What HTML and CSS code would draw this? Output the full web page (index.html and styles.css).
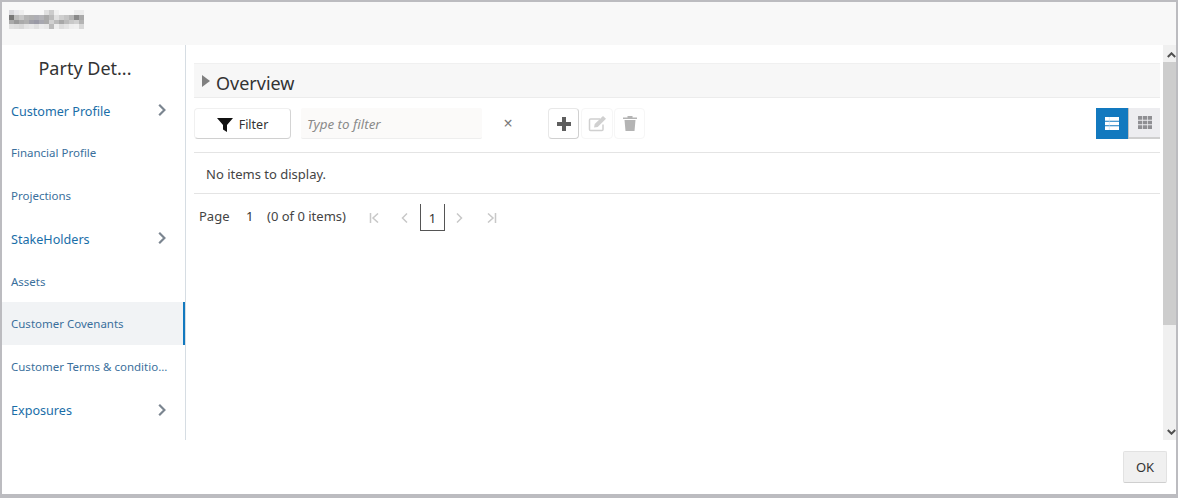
FILE: index.html
```html
<!DOCTYPE html>
<html lang="en">
<head>
<meta charset="utf-8">
<title>Party Details</title>
<link rel="stylesheet" href="styles.css">
</head>
<body>
<div class="dialog">
  <header class="dialog-header">
    <svg class="logo" width="75" height="19" viewBox="0 0 75 19" shape-rendering="crispEdges" aria-hidden="true">
      <g>
        <rect x="0" y="0" width="5" height="5" fill="#d8d8dc"/><rect x="5" y="0" width="5" height="5" fill="#e8e8ec"/><rect x="10" y="0" width="5" height="5" fill="#eeeeee"/><rect x="35" y="0" width="5" height="5" fill="#e0e0e0"/><rect x="40" y="0" width="5" height="5" fill="#cccccc"/><rect x="45" y="0" width="5" height="5" fill="#f0f0f0"/><rect x="65" y="0" width="5" height="5" fill="#ececec"/><rect x="70" y="0" width="5" height="5" fill="#ececec"/>
        <rect x="0" y="5" width="5" height="5" fill="#777777"/><rect x="5" y="5" width="5" height="5" fill="#bbbbbb"/><rect x="10" y="5" width="5" height="5" fill="#c8c8c8"/><rect x="15" y="5" width="5" height="5" fill="#b5b5b5"/><rect x="20" y="5" width="5" height="5" fill="#b0b0b0"/><rect x="25" y="5" width="5" height="5" fill="#aeaeb4"/><rect x="30" y="5" width="5" height="5" fill="#b4b4b8"/><rect x="35" y="5" width="5" height="5" fill="#aaaaaa"/><rect x="40" y="5" width="5" height="5" fill="#bbbbbb"/><rect x="45" y="5" width="5" height="5" fill="#e0e0e0"/><rect x="50" y="5" width="5" height="5" fill="#cfcfcf"/><rect x="55" y="5" width="5" height="5" fill="#c5c5c5"/><rect x="60" y="5" width="5" height="5" fill="#b5b5b5"/><rect x="65" y="5" width="5" height="5" fill="#8a8a8a"/><rect x="70" y="5" width="5" height="5" fill="#aaaaaa"/>
        <rect x="0" y="10" width="5" height="4" fill="#aaaaaa"/><rect x="5" y="10" width="5" height="4" fill="#999999"/><rect x="10" y="10" width="5" height="4" fill="#aaaaaa"/><rect x="15" y="10" width="5" height="4" fill="#b0b0b0"/><rect x="20" y="10" width="5" height="4" fill="#a0a0a8"/><rect x="25" y="10" width="5" height="4" fill="#9a9aa6"/><rect x="30" y="10" width="5" height="4" fill="#a8a8b0"/><rect x="35" y="10" width="5" height="4" fill="#aaaaaa"/><rect x="40" y="10" width="5" height="4" fill="#d0d0d0"/><rect x="45" y="10" width="5" height="4" fill="#bbbbbb"/><rect x="50" y="10" width="5" height="4" fill="#a8a8a8"/><rect x="55" y="10" width="5" height="4" fill="#bbbbbb"/><rect x="60" y="10" width="5" height="4" fill="#c8c8c8"/><rect x="65" y="10" width="5" height="4" fill="#d0d0d0"/><rect x="70" y="10" width="5" height="4" fill="#b4b4b4"/>
        <rect x="0" y="14" width="5" height="5" fill="#e0e0e0"/><rect x="5" y="14" width="5" height="5" fill="#dddddd"/><rect x="10" y="14" width="5" height="5" fill="#d8d8d8"/><rect x="15" y="14" width="5" height="5" fill="#e4e4e4"/><rect x="20" y="14" width="5" height="5" fill="#e8e8e8"/><rect x="25" y="14" width="5" height="5" fill="#e0e0e0"/><rect x="30" y="14" width="5" height="5" fill="#ececec"/><rect x="35" y="14" width="5" height="5" fill="#e8e8e8"/><rect x="40" y="14" width="5" height="5" fill="#bbbbbb"/><rect x="45" y="14" width="5" height="5" fill="#eeeeee"/><rect x="50" y="14" width="5" height="5" fill="#dddddd"/><rect x="55" y="14" width="5" height="5" fill="#e4e4e4"/><rect x="60" y="14" width="5" height="5" fill="#eeeeee"/><rect x="65" y="14" width="5" height="5" fill="#f0f0f0"/><rect x="70" y="14" width="5" height="5" fill="#d8d8d8"/>
      </g>
    </svg>
  </header>
  <div class="dialog-body">
    <nav class="sidenav">
      <h2 class="sidenav-title">Party Det...</h2>
      <ul class="nav-list">
        <li class="nav-item first">Customer Profile<svg class="chev" viewBox="0 0 8 12"><path d="M1.200 .8L6.400 6l-5.200 5.200" /></svg></li>
        <li class="nav-item small">Financial Profile</li>
        <li class="nav-item small">Projections</li>
        <li class="nav-item">StakeHolders<svg class="chev" viewBox="0 0 8 12"><path d="M1.200 .8L6.400 6l-5.200 5.200" /></svg></li>
        <li class="nav-item small">Assets</li>
        <li class="nav-item small active">Customer Covenants</li>
        <li class="nav-item small">Customer Terms &amp; conditio...</li>
        <li class="nav-item">Exposures<svg class="chev" viewBox="0 0 8 12"><path d="M1.200 .8L6.400 6l-5.200 5.200" /></svg></li>
      </ul>
    </nav>
    <main class="content">
      <div class="section-head">
        <span class="caret"></span>
        <span class="section-title">Overview</span>
      </div>
      <div class="toolbar">
        <button class="btn filter-btn">
          <svg width="16" height="14" viewBox="0 0 16 14"><path d="M0 0h16L10 7v7L6 11.500V7z" fill="#111"/></svg>
          Filter
        </button>
        <div class="filter-input">Type to filter</div>
        <span class="clear">&#215;</span>
        <div class="actions">
          <button class="icon-btn raised"><svg width="14" height="14" viewBox="0 0 14 14"><path d="M5 0h4v5h5v4H9v5H5V9H0V5h5z" fill="#5e5e5e"/></svg></button>
          <button class="icon-btn"><svg width="19" height="16" viewBox="0 0 19 16"><path d="M12 3H2.500a1 1 0 0 0-1 1v9.500a1 1 0 0 0 1 1H14a1 1 0 0 0 1-1V8.500" fill="none" stroke="#d0d0d0" stroke-width="1.500"/><path d="M6 11.500l.7-3.500L15 0l3 2.700L9.700 11z" fill="#d0d0d0"/></svg></button>
          <button class="icon-btn"><svg width="14" height="15" viewBox="0 0 14 15"><path d="M0 1.500h4.500V0h5v1.500H14V3H0zM1.500 4h11l-1 11h-9z" fill="#b4b4b4"/></svg></button>
        </div>
        <div class="view-toggle">
          <button class="view on"><svg width="14" height="13" viewBox="0 0 14 13"><path d="M0 0h14v3.700H0zM0 4.700h14v3.600H0zM0 9.300h14V13H0z" fill="#fff"/><path d="M4.300 0v13" stroke="#bcdcf2" stroke-width=".6"/></svg></button>
          <button class="view"><svg width="14" height="13" viewBox="0 0 14 13"><path d="M0 0h4.200v3.700H0zM4.900 0h4.200v3.700H4.900zM9.800 0H14v3.700H9.800zM0 4.700h4.200v3.600H0zM4.900 4.700h4.200v3.600H4.900zM9.800 4.700H14v3.600H9.800zM0 9.300h4.200V13H0zM4.900 9.300h4.200V13H4.900zM9.800 9.300H14V13H9.800z" fill="#8f8f93"/></svg></button>
        </div>
      </div>
      <div class="empty">No items to display.</div>
      <div class="pager">
        <span class="pg-label">Page</span>
        <span class="pg-num">1</span>
        <span class="pg-count">(0 of 0 items)</span>
        <div class="pg-links">
          <svg class="pg-icon" width="10" height="10" viewBox="0 0 10 10"><path d="M1.500 0v10M9 .5L4 5l5 4.500" /></svg>
          <svg class="pg-icon" width="10" height="10" viewBox="0 0 10 10"><path d="M7 .5L2.500 5 7 9.500" /></svg>
          <span class="pg-current">1</span>
          <svg class="pg-icon" width="10" height="10" viewBox="0 0 10 10"><path d="M3 .5L7.500 5 3 9.500" /></svg>
          <svg class="pg-icon" width="10" height="10" viewBox="0 0 10 10"><path d="M8.500 0v10M1 .5L6 5l-5 4.500" /></svg>
        </div>
      </div>
    </main>
    <div class="scrollbar">
      <span class="sb-btn up"><svg width="9" height="6" viewBox="0 0 9 6"><path d="M.8 5L4.500 1.300 8.200 5" /></svg></span>
      <span class="sb-thumb"></span>
      <span class="sb-track"></span>
      <span class="sb-btn"><svg width="9" height="6" viewBox="0 0 9 6"><path d="M.8 1L4.500 4.700 8.200 1" /></svg></span>
    </div>
  </div>
  <footer class="dialog-footer">
    <button class="ok-btn">OK</button>
  </footer>
</div>
</body>
</html>
```

FILE: styles.css
```css
* { box-sizing: border-box; }
html, body { margin: 0; padding: 0; }
body {
  width: 1178px;
  height: 498px;
  overflow: hidden;
  background: #fff;
  font-family: "Noto Sans", "Open Sans", sans-serif;
  color: #333;
}
button { font-family: inherit; }
.dialog {
  width: 1178px;
  height: 498px;
  display: flex;
  flex-direction: column;
  border-style: solid;
  border-color: #bcbcc0;
  border-width: 2px 2px 4px 2px;
  background: #fff;
}
.dialog-header {
  height: 43px;
  flex: none;
  background: #f8f8f8;
  display: flex;
  align-items: flex-start;
  padding: 8px 0 0 7px;
}
.dialog-body {
  height: 395px;
  flex: none;
  display: flex;
}
.sidenav {
  width: 184px;
  flex: none;
  border-right: 1px solid #d6dde3;
}
.sidenav-title {
  margin: 0;
  height: 42.500px;
  padding: 10px 17px 0 0;
  text-align: center;
  font-size: 18px;
  line-height: 26px;
  font-weight: 400;
  color: #333;
}
.nav-list { list-style: none; margin: 0; padding: 0; }
.nav-item {
  height: 42.900px;
  display: flex;
  align-items: center;
  justify-content: space-between;
  padding: 3px 19px 0 9px;
  font-size: 12.600px;
  color: #1a6ea8;
  white-space: nowrap;
}
.nav-item.first { padding-top: 5px; }
.nav-item.small { font-size: 11.500px; color: #3a6f9c; padding-top: 1px; }
.nav-item.active {
  background: #f1f3f5;
  border-right: 2px solid #1279bf;
  padding-top: 0;
}
.chev { width: 8px; height: 12px; fill: none; stroke: #7b8590; stroke-width: 2.200; margin-bottom: 2px; }
.content {
  flex: 1;
  min-width: 0;
  padding: 18px 3px 0 8px;
}
.section-head {
  height: 35px;
  background: #f7f7f7;
  border-top: 1px solid #f0f0f0;
  border-bottom: 1px solid #ececec;
  display: flex;
  align-items: center;
  padding-left: 8px;
}
.caret {
  width: 0;
  height: 0;
  border-style: solid;
  border-width: 6px 0 6px 8px;
  border-color: transparent transparent transparent #808080;
  margin-right: 6px;
  margin-top: 1px;
}
.section-title { font-size: 18px; color: #333; margin-top: 4px; }
.toolbar {
  height: 55px;
  display: flex;
  align-items: flex-start;
  padding-top: 10px;
  border-bottom: 1px solid #e4e4e4;
}
.btn, .icon-btn, .view, .ok-btn { cursor: pointer; }
.filter-btn {
  width: 97px;
  height: 31px;
  background: #fff;
  border: 1px solid #f0f0f0;
  border-right-color: #d4d4d4;
  border-bottom-color: #d0d0d0;
  border-radius: 4px;
  display: flex;
  align-items: center;
  justify-content: center;
  gap: 6px;
  font-size: 12.500px;
  color: #333;
  padding: 2px 0 0;
}
.filter-input {
  width: 181px;
  height: 31px;
  margin-left: 10px;
  background: #fbfaf9;
  border-bottom: 1px solid #eeeeee;
  border-radius: 2px;
  padding: 0 6px;
  font-size: 13.400px;
  font-style: italic;
  line-height: 33px;
  color: #8a8a8a;
}
.clear {
  width: 52px;
  text-align: center;
  font-size: 16px;
  line-height: 31px;
  color: #7a7a7a;
}
.actions { display: flex; gap: 2px; margin-left: 14px; }
.icon-btn {
  width: 32px;
  height: 31px;
  background: #fff;
  border: 1px solid #f6f6f6;
  border-radius: 4px;
  display: flex;
  align-items: center;
  justify-content: center;
  padding: 0;
}
.icon-btn.raised {
  width: 31px;
  border-color: #e8e8e8;
  border-right-color: #d0d0d0;
  border-bottom-color: #d0d0d0;
}
.icon-btn:last-child { width: 31px; margin-left: -1px; }
.view-toggle { display: flex; margin-left: auto; }
.view {
  width: 31px;
  height: 31px;
  border: 0;
  background: #ededf0;
  border-bottom: 2px solid #cfcfcf;
  display: flex;
  align-items: center;
  justify-content: center;
  padding: 0;
}
.view.on {
  background: #1279bf;
  border-bottom: 0;
  border-right: 1px solid #c0c0c0;
  width: 33px;
}
.empty {
  height: 41px;
  border-bottom: 1px solid #e4e4e4;
  padding-left: 12px;
  font-size: 13px;
  line-height: 43px;
  color: #444;
}
.pager {
  height: 47px;
  display: flex;
  align-items: center;
  padding-left: 5px;
  font-size: 13px;
  color: #444;
}
.pg-label { width: 47px; padding-bottom: 3px; }
.pg-num { width: 21px; padding-bottom: 3px; color: #333; }
.pg-count { width: 102px; padding-bottom: 3px; }
.pg-links { display: flex; align-items: center; }
.pg-icon { fill: none; stroke: #c8c8c8; stroke-width: 1.500; }
.pg-icon:nth-child(1) { margin-right: 21px; }
.pg-icon:nth-child(2) { margin-right: 10px; }
.pg-icon:nth-child(4) { margin-left: 9px; margin-right: 23px; }
.pg-current {
  width: 25px;
  height: 27px;
  border: 1px solid #555;
  border-top: 0;
  text-align: center;
  line-height: 28px;
  font-size: 13px;
  color: #333;
}
.scrollbar {
  width: 13px;
  flex: none;
  display: flex;
  flex-direction: column;
  background: #f0f0f0;
}
.sb-btn {
  height: 17px;
  flex: none;
  display: flex;
  align-items: center;
  justify-content: center;
  padding-left: 3px;
  background: #f0f0f0;
}
.sb-btn.up { padding-top: 3px; }
.sb-btn svg { fill: none; stroke: #505050; stroke-width: 2; }
.sb-thumb { height: 263px; flex: none; background: #cdcdcd; }
.sb-track { flex: 1; }
.dialog-footer {
  flex: 1;
  display: flex;
  justify-content: flex-end;
  align-items: flex-start;
  padding: 11px 9px 0 0;
}
.ok-btn {
  width: 44px;
  height: 32px;
  background: #f0f0f0;
  border: 1px solid #e2e2e2;
  border-bottom-color: #cfcfcf;
  border-radius: 2px;
  font-size: 13px;
  color: #333;
  padding: 0;
}
```
